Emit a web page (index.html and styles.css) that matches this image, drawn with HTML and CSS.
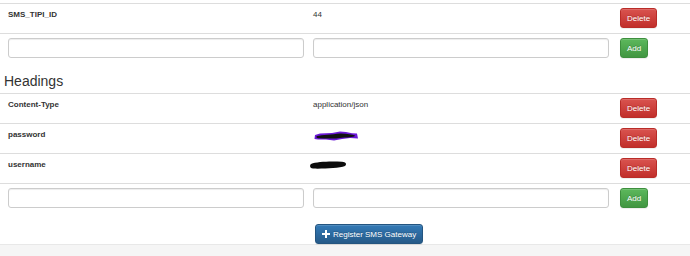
FILE: index.html
```html
<!DOCTYPE html>
<html>
<head>
<meta charset="utf-8">
<link rel="stylesheet" href="styles.css">
</head>
<body>
<div class="page">
  <div class="table first">
    <div class="row">
      <div class="cell key">SMS_TIPI_ID</div>
      <div class="cell val">44</div>
      <div class="cell act"><button class="btn btn-danger">Delete</button></div>
    </div>
    <div class="row add-row">
      <div class="cell act"><input class="field" type="text"></div>
      <div class="cell act"><input class="field" type="text"></div>
      <div class="cell act"><button class="btn btn-success">Add</button></div>
    </div>
  </div>

  <h3 class="heading">Headings</h3>

  <div class="table">
    <div class="row">
      <div class="cell key">Content-Type</div>
      <div class="cell val">application/json</div>
      <div class="cell act"><button class="btn btn-danger">Delete</button></div>
    </div>
    <div class="row">
      <div class="cell key">password</div>
      <div class="cell val">
        <svg class="scribble pw" width="48" height="12" viewBox="0 0 48 12">
          <path d="M3 5 L8 3.5 L20 3 L28 1.5 L34 2 L40 3.2 L45 3.5 L46 8.5 L38 8 L30 9 L22 10.5 L14 9.5 L6 9.5 L2.5 9 Z" fill="#6b19d6"/>
          <path d="M5 6 C10 4.6 20 4.4 28 3.4 C34 3.2 40 4.4 43 5.5 C43 7.2 38 7.2 30 7.8 C22 9 14 8.6 6 8.2 C4 7.8 4 6.6 5 6 Z" fill="#111"/>
        </svg>
      </div>
      <div class="cell act"><button class="btn btn-danger">Delete</button></div>
    </div>
    <div class="row">
      <div class="cell key">username</div>
      <div class="cell val">
        <svg class="scribble un" width="40" height="10" viewBox="0 0 40 10">
          <path d="M2 4 C8 1.5 22 1.2 33 1.8 C37 2.2 38 4.2 36 6 C30 8.4 14 8.8 4 8.6 C0.5 8.2 0.5 5.2 2 4 Z" fill="#0c0c0c"/>
        </svg>
      </div>
      <div class="cell act"><button class="btn btn-danger">Delete</button></div>
    </div>
    <div class="row add-row">
      <div class="cell act"><input class="field" type="text"></div>
      <div class="cell act"><input class="field" type="text"></div>
      <div class="cell act"><button class="btn btn-success">Add</button></div>
    </div>
  </div>

  <div class="actions">
    <button class="btn btn-primary">
      <svg class="plus" width="8" height="8" viewBox="0 0 8 8"><path d="M3 0h2v3h3v2H5v3H3V5H0V3h3z" fill="#fff"/></svg>
      Register SMS Gateway
    </button>
  </div>

  <div class="footer"></div>
</div>
</body>
</html>
```

FILE: styles.css
```css
* { box-sizing: border-box; }

html, body {
  margin: 0;
  padding: 0;
  background: #fff;
}

body {
  font-family: "Liberation Sans", Arial, sans-serif;
  font-size: 8px;
  line-height: 11px;
  color: #333;
  width: 690px;
  height: 256px;
  overflow: hidden;
}

.page {
  padding-top: 3px;
}

.table {
  width: 690px;
}

.row {
  display: grid;
  grid-template-columns: 305px 307px 1fr;
  border-top: 1px solid #ddd;
}

.cell {
  padding: 5px 0 4px 8px;
}

.cell.act {
  padding: 4px 0 4px 8px;
}

.row .cell.act:last-child {
  padding-bottom: 5px;
}

.add-row .cell.act:last-child {
  padding-bottom: 4px;
}

.key {
  font-weight: bold;
}

.scribble {
  display: block;
}

.scribble.pw {
  margin: 1px 0 0 -1px;
}

.scribble.un {
  margin: 1px 0 0 -4px;
}

.field {
  display: block;
  width: 296px;
  height: 20px;
  margin: 0;
  padding: 2px 5px;
  border: 1px solid #ccc;
  border-radius: 3px;
  background: #fff;
  box-shadow: inset 0 1px 1px rgba(0, 0, 0, 0.075);
  font: inherit;
}

.heading {
  margin: 11px 0 4px 4px;
  font-size: 14px;
  line-height: 16px;
  font-weight: normal;
  color: #333;
}

.btn {
  display: inline-flex;
  align-items: center;
  justify-content: center;
  height: 20px;
  margin: 0;
  padding: 0 6px;
  border: 1px solid transparent;
  border-radius: 3px;
  font-family: "Liberation Sans", Arial, sans-serif;
  font-size: 8px;
  line-height: 11px;
  color: #fff;
  text-shadow: 0 -1px 0 rgba(0, 0, 0, 0.2);
  box-shadow: inset 0 1px 0 rgba(255, 255, 255, 0.15), 0 1px 1px rgba(0, 0, 0, 0.075);
  cursor: pointer;
}

.btn-danger {
  background: linear-gradient(to bottom, #d9534f 0%, #c12e2a 100%);
  border-color: #b92c28;
}

.btn-success {
  background: linear-gradient(to bottom, #5cb85c 0%, #419641 100%);
  border-color: #3e8f3e;
}

.btn-primary {
  background: linear-gradient(to bottom, #337ab7 0%, #265a88 100%);
  border-color: #245580;
  gap: 3px;
}

.plus {
  display: block;
}

.actions {
  display: flex;
  margin-top: 12px;
  padding-left: 315px;
}

.footer {
  height: 20px;
  background: #f5f5f5;
  border-top: 1px solid #e8e8e8;
}
```
